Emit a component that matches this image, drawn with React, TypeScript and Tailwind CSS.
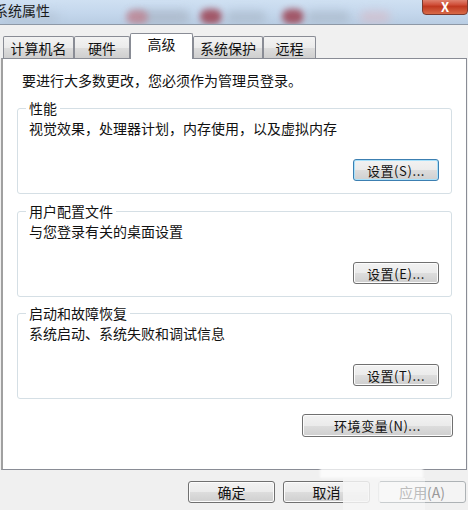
import React from "react";

const FONT = { fontFamily: '"Noto Sans CJK SC", "Noto Sans", sans-serif' };

function WinButton({
  children,
  className = "",
  focused = false,
  disabled = false,
}: {
  children: React.ReactNode;
  className?: string;
  focused?: boolean;
  disabled?: boolean;
}) {
  return (
    <div
      className={
        "flex items-center justify-center h-[22px] rounded-[3px] border text-[13px] leading-none " +
        (focused
          ? "border-[#3c7fb1] shadow-[inset_0_0_0_1px_#a8e1fb] bg-[linear-gradient(to_bottom,#f2f2f2_0%,#ebebeb_50%,#dddddd_51%,#cfcfcf_100%)] text-[#111] "
          : disabled
          ? "border-[#adb2b5] bg-[#f4f4f4] text-[#9a9a9a] "
          : "border-[#707070] shadow-[inset_0_0_0_1px_#fcfcfc] bg-[linear-gradient(to_bottom,#f2f2f2_0%,#ebebeb_50%,#dddddd_51%,#cfcfcf_100%)] text-[#111] ") +
        className
      }
    >
      {children}
    </div>
  );
}

function Group({
  title,
  desc,
  btn,
  focused = false,
  className = "",
}: {
  title: string;
  desc: string;
  btn: string;
  focused?: boolean;
  className?: string;
}) {
  return (
    <div
      className={
        "relative ml-[14px] w-[435px] h-[86px] border border-[#d5dfe5] rounded-[3px] flex flex-col pt-[10px] pl-[11px] pr-[12px] " +
        className
      }
    >
      <span className="absolute left-[8px] top-[-10px] bg-white px-[3px] text-[14px] leading-[18px] text-[#111]">
        {title}
      </span>
      <div className="text-[14px] leading-[18px] text-[#111]">{desc}</div>
      <div className="flex justify-end mt-[22px]">
        <WinButton focused={focused} className="w-[86px] tracking-[0.6px]">
          {btn}
        </WinButton>
      </div>
    </div>
  );
}

export default function App() {
  const tabs = [
    { label: "计算机名", w: 71 },
    { label: "硬件", w: 56 },
    { label: "高级", w: 63, active: true },
    { label: "系统保护", w: 70 },
    { label: "远程", w: 53 },
  ];
  return (
    <div
      className="relative w-[468px] h-[510px] overflow-hidden bg-[#f0f0f0] text-[#111]"
      style={FONT}
    >
      {/* Title bar */}
      <div className="relative h-[25px] border-b border-[#8d98a6] bg-[linear-gradient(to_bottom,#cfe0f2_0%,#c4d7ec_55%,#b9cde3_100%)] overflow-hidden">
        <div className="absolute left-[130px] top-[10px] w-[60px] h-[14px] rounded-full bg-[#a8b4c4] blur-[4px] opacity-70" />
        <div className="absolute left-[126px] top-[10px] w-[22px] h-[14px] rounded-full bg-[#c07a88] blur-[3px] opacity-70" />
        <div className="absolute left-[200px] top-[9px] w-[22px] h-[15px] rounded-full bg-[#9a3848] blur-[3px] opacity-80" />
        <div className="absolute left-[226px] top-[11px] w-[40px] h-[12px] rounded-full bg-[#a6b4c4] blur-[4px] opacity-60" />
        <div className="absolute left-[282px] top-[9px] w-[22px] h-[15px] rounded-full bg-[#9a3848] blur-[3px] opacity-80" />
        <div className="absolute left-[306px] top-[11px] w-[44px] h-[12px] rounded-full bg-[#a6b4c4] blur-[4px] opacity-60" />
        <div className="absolute left-[360px] top-[11px] w-[30px] h-[12px] rounded-full bg-[#d8b8c4] blur-[4px] opacity-60" />
        <div className="absolute left-[0px] top-[12px] w-[60px] h-[12px] rounded-full bg-[#b0bfd0] blur-[5px] opacity-50" />
        <div className="relative ml-[-6px] pt-[1px] text-[14px] leading-[18px] text-[#1a1a1a]">
          系统属性
        </div>
        <div className="absolute right-[0px] top-[-4px] w-[46px] h-[19px] rounded-[4px] border border-[#7a3a30] bg-[linear-gradient(to_bottom,#e8a090_0%,#d0503a_45%,#c03820_55%,#d86a48_100%)] flex items-end justify-center">
          <span className="text-white text-[13px] leading-[14px] font-bold">X</span>
        </div>
      </div>

      {/* Tabs */}
      <div className="flex items-end h-[33px] pl-[3px]">
        {tabs.map((t) =>
          t.active ? (
            <div
              key={t.label}
              className="relative z-10 -mb-[1px] h-[26px] border border-b-0 border-[#898c95] bg-white flex items-start justify-center pt-[1px] text-[14px] leading-[18px] rounded-t-[2px]"
              style={{ width: t.w }}
            >
              {t.label}
            </div>
          ) : (
            <div
              key={t.label}
              className="h-[22px] border border-b-0 border-[#898c95] bg-[linear-gradient(to_bottom,#f3f3f3_0%,#ebebeb_50%,#dddddd_51%,#cfcfcf_100%)] flex items-center justify-center text-[14px] leading-[18px] rounded-t-[2px]"
              style={{ width: t.w }}
            >
              {t.label}
            </div>
          )
        )}
      </div>

      {/* Panel */}
      <div className="ml-[1px] w-[466px] h-[412px] bg-white border border-[#898c95] border-l-[2px] border-l-[#a0a0a0] flex flex-col pt-[12px]">
        <div className="pl-[19px] text-[14px] leading-[18px]">
          要进行大多数更改，您必须作为管理员登录。
        </div>
        <Group
          className="mt-[19px]"
          title="性能"
          desc="视觉效果，处理器计划，内存使用，以及虚拟内存"
          btn="设置(S)..."
          focused
        />
        <Group
          className="mt-[17px]"
          title="用户配置文件"
          desc="与您登录有关的桌面设置"
          btn="设置(E)..."
        />
        <Group
          className="mt-[16px]"
          title="启动和故障恢复"
          desc="系统启动、系统失败和调试信息"
          btn="设置(T)..."
        />
        <div className="flex justify-start ml-[299px] mt-[15px]">
          <WinButton className="w-[151px] h-[23px] tracking-[0.6px]">环境变量(N)...</WinButton>
        </div>
      </div>

      {/* Bottom buttons */}
      <div className="flex justify-end gap-[8px] mt-[11px] pr-[2px]">
        <WinButton className="w-[87px] text-[14px]">确定</WinButton>
        <WinButton className="w-[87px] text-[14px]">取消</WinButton>
        <WinButton className="w-[88px] text-[14px]" disabled>
          应用(A)
        </WinButton>
      </div>

      {/* Watermark overlay */}
      <div className="absolute left-[320px] top-[460px] w-[103px] h-[18px] bg-white/75 blur-[1px]" />
      <div className="absolute left-[343px] top-[478px] w-[37px] h-[32px] bg-[#f6f6f6]/85" />
      <div className="absolute left-[380px] top-[478px] w-[45px] h-[32px] bg-white/35" />
    </div>
  );
}
